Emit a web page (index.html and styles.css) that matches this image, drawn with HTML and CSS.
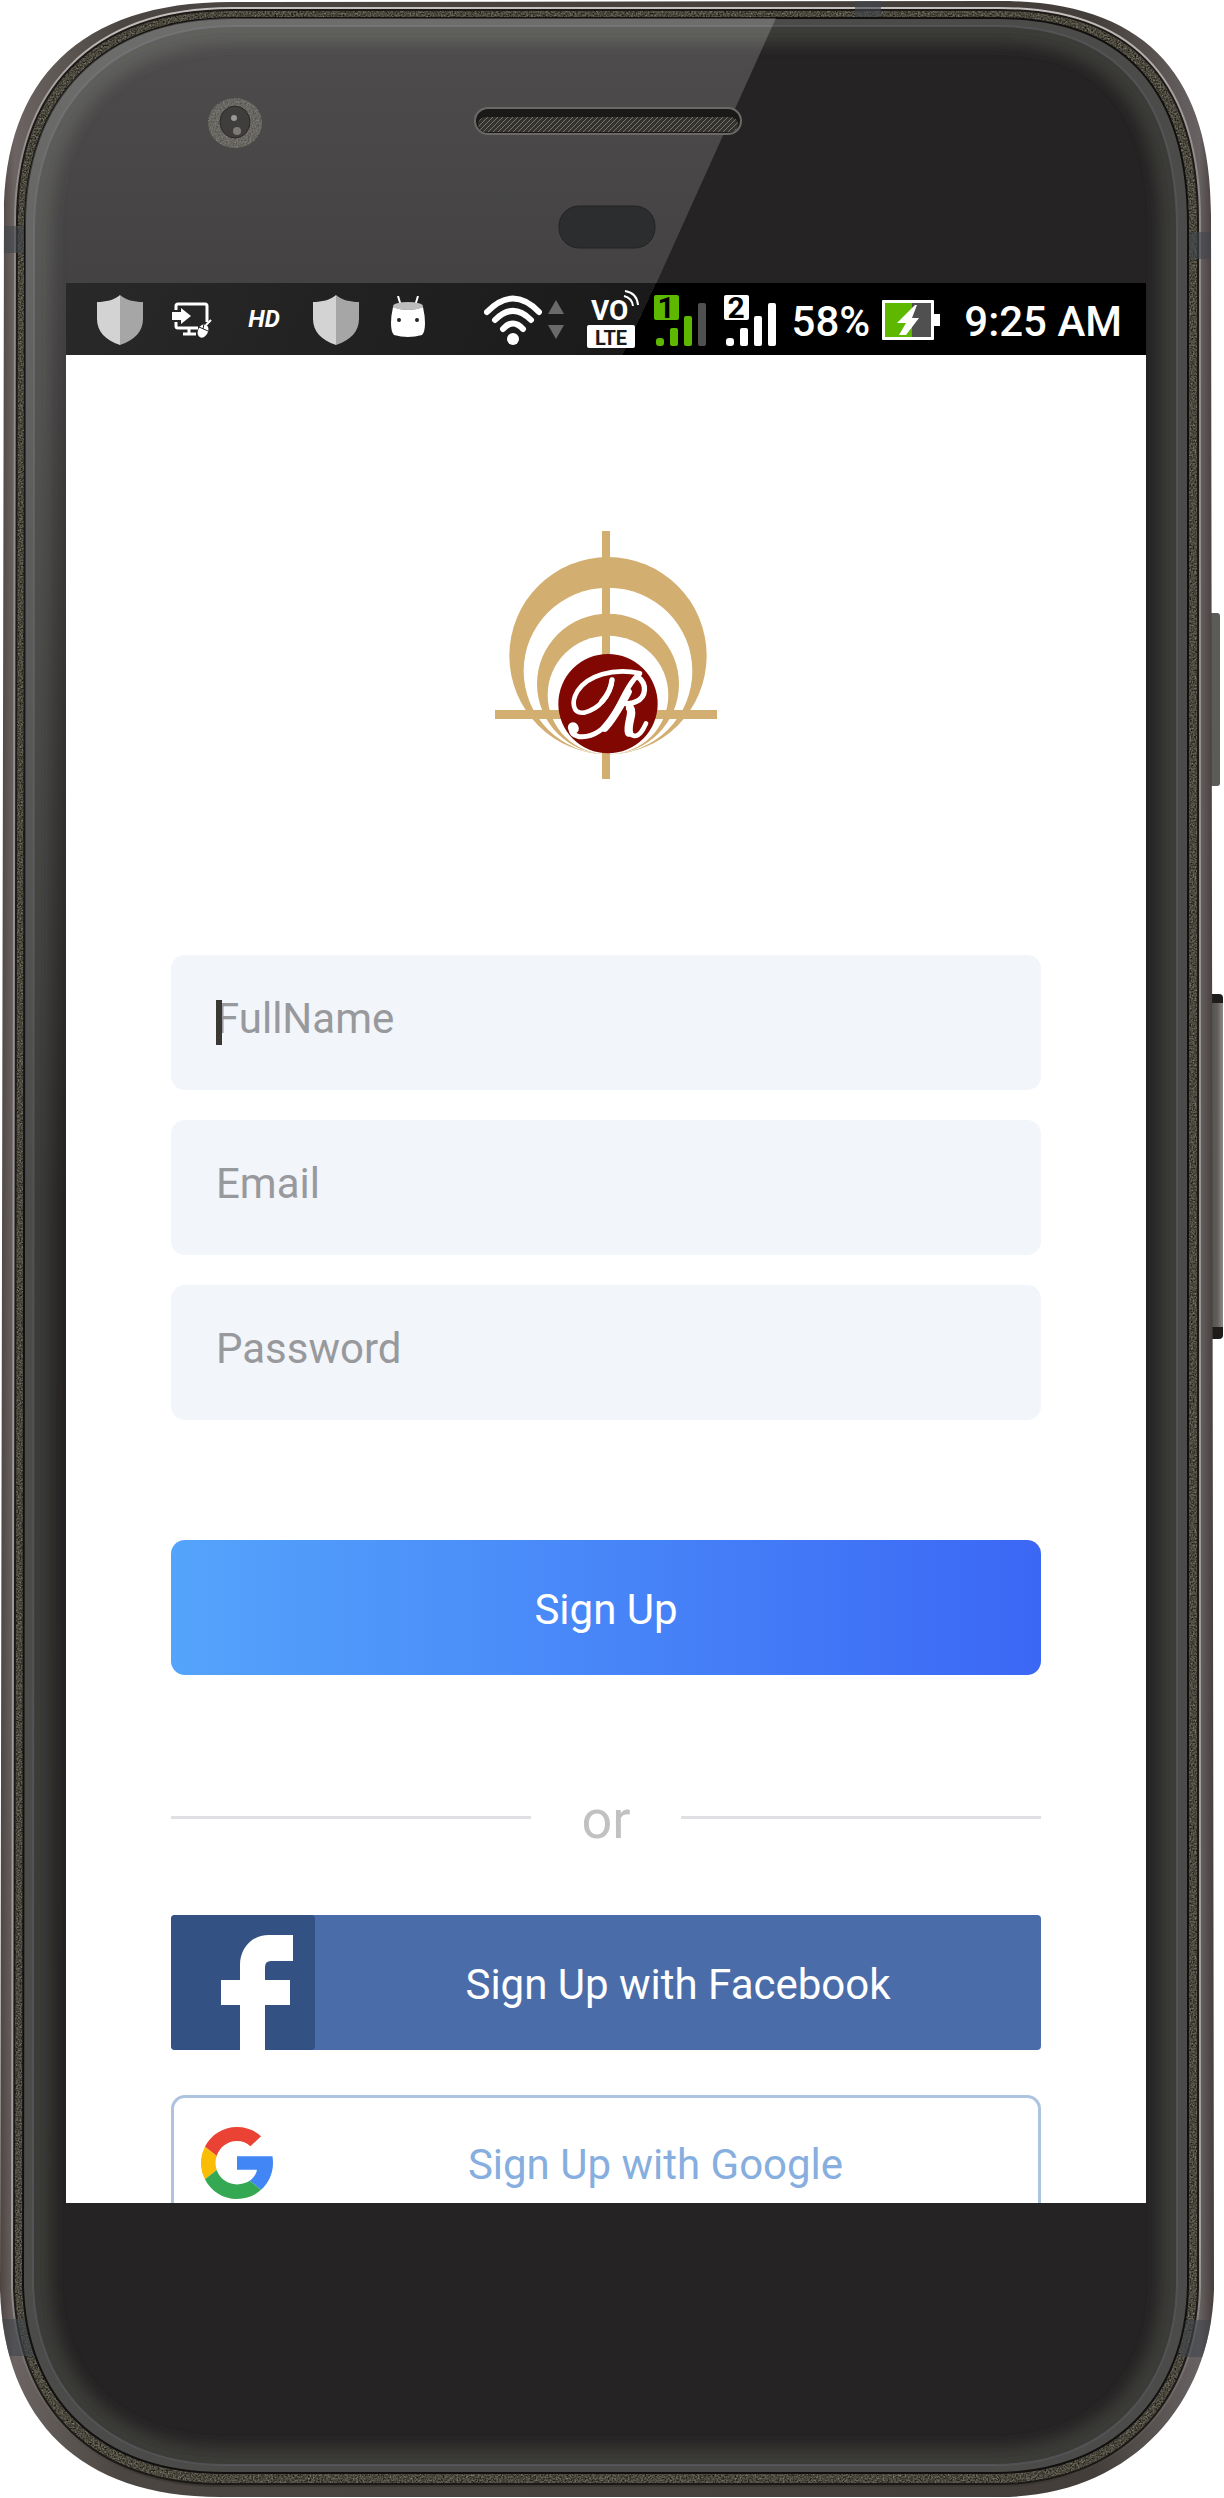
FILE: index.html
```html
<!DOCTYPE html>
<html lang="en">
<head>
<meta charset="utf-8">
<meta name="viewport" content="width=device-width, initial-scale=1">
<title>Sign Up</title>
<link rel="stylesheet" href="styles.css">
</head>
<body>
<main class="phone">
  <svg class="phone-body" viewBox="0 0 1224 2498" preserveAspectRatio="none" aria-hidden="true">
    <defs>
      <linearGradient id="metal" x1="0" x2="1" y1="0" y2="0">
        <stop offset="0" stop-color="#4c4542"/><stop offset=".012" stop-color="#6b6462"/>
        <stop offset=".1" stop-color="#4b4642"/><stop offset=".9" stop-color="#433e3a"/>
        <stop offset=".988" stop-color="#686162"/><stop offset="1" stop-color="#443d3b"/>
      </linearGradient>
      <linearGradient id="edge" x1="0" x2="0" y1="0" y2="1">
        <stop offset="0" stop-color="#c4c0be"/><stop offset=".06" stop-color="#8f8a88"/>
        <stop offset=".9" stop-color="#a5a0a2"/><stop offset=".97" stop-color="#67625e"/><stop offset="1" stop-color="#3b3833"/>
      </linearGradient>
      <linearGradient id="shine" gradientUnits="userSpaceOnUse" x1="0" x2="0" y1="18" y2="1200">
        <stop offset="0" stop-color="#fff" stop-opacity=".19"/>
        <stop offset=".28" stop-color="#fff" stop-opacity=".13"/>
        <stop offset="1" stop-color="#fff" stop-opacity="0"/>
      </linearGradient>
      <linearGradient id="key" x1="0" x2="1" y1="0" y2="0">
        <stop offset="0" stop-color="#4c4b47"/><stop offset=".65" stop-color="#5e5d59"/><stop offset="1" stop-color="#8d8987"/>
      </linearGradient>
      <pattern id="mesh" width="5" height="5" patternUnits="userSpaceOnUse">
        <rect width="5" height="5" fill="#34332f"/>
        <path d="M-1 6L6 -1M-1 1L1 -1M4 6L6 4" stroke="#77746f" stroke-width="1"/>
      </pattern>
      <filter id="grain" x="0" y="0" width="1" height="1" color-interpolation-filters="sRGB">
        <feTurbulence type="fractalNoise" baseFrequency=".6" numOctaves="2" result="n"/>
        <feColorMatrix in="n" type="matrix" values=".5 .3 0 0 -.11  .5 .3 0 0 -.12  .5 .3 0 0 -.16  0 0 0 0 1"/>
        <feComposite in2="SourceGraphic" operator="in"/>
      </filter>
      <filter id="soft" x="-5%" y="-5%" width="110%" height="110%"><feGaussianBlur stdDeviation="7"/></filter>
      <clipPath id="shell"><path d="M4 215C4 80 80 2 230 2L1000 1C1145 1 1211 75 1211 215L1214 2290C1210 2410 1125 2497 1000 2497H220C80 2497 4 2420 0 2290Z"/></clipPath>
      <clipPath id="glass"><path d="M25 225C25 100 100 18 234 18H998C1130 18 1188 96 1188 225V2286C1186 2398 1112 2473 996 2473H224C100 2473 26 2400 23 2286Z"/></clipPath>
      <clipPath id="face"><path d="M34 230C34 110 108 26 236 26H996C1122 26 1177 104 1177 230V2284C1176 2390 1106 2465 994 2465H226C110 2465 35 2392 33 2284Z"/></clipPath>
    </defs>
    <!-- power and volume keys -->
    <rect x="1206" y="613" width="14" height="173" rx="3" fill="#5b5c58"/>
    <rect x="1206" y="994" width="17" height="345" rx="4" fill="#1e1c1b"/>
    <rect x="1206" y="1003" width="17" height="324" fill="url(#key)"/>
    <!-- metal frame -->
    <path d="M4 215C4 80 80 2 230 2L1000 1C1145 1 1211 75 1211 215L1214 2290C1210 2410 1125 2497 1000 2497H220C80 2497 4 2420 0 2290Z" fill="url(#metal)"/>
    <path d="M17 222C17 92 90 10 232 10H1000C1138 10 1198 88 1198 222V2288C1195 2404 1118 2484 998 2484H222C92 2484 18 2408 14 2288Z" fill="#1c1a18" stroke="url(#edge)" stroke-width="6"/>
    <path d="M17 222C17 92 90 10 232 10H1000C1138 10 1198 88 1198 222V2288C1195 2404 1118 2484 998 2484H222C92 2484 18 2408 14 2288Z" filter="url(#grain)"/>
    <path d="M17 222C17 92 90 10 232 10H1000C1138 10 1198 88 1198 222V2288C1195 2404 1118 2484 998 2484H222C92 2484 18 2408 14 2288Z" fill="none" stroke="#1c1917" stroke-width="2"/>
    <!-- antenna bands -->
    <g clip-path="url(#shell)" fill="#41464c" fill-opacity=".6">
      <path d="M0 226H25V253H0ZM1186 232H1214V259H1186ZM855 0H881V18H855ZM0 2319H40V2356H0ZM1180 2320H1220V2357H1180Z"/>
    </g>
    <!-- glass -->
    <path d="M25 225C25 100 100 18 234 18H998C1130 18 1188 96 1188 225V2286C1186 2398 1112 2473 996 2473H224C100 2473 26 2400 23 2286Z" fill="#4b4b49" stroke="#12100f" stroke-width="2"/>
    <g clip-path="url(#face)">
      <rect width="1224" height="2498" fill="#252323"/>
      <path d="M34 230C34 110 108 26 236 26H996C1122 26 1177 104 1177 230V2284C1176 2390 1106 2465 994 2465H226C110 2465 35 2392 33 2284Z" fill="none" stroke="#3b3a37" stroke-width="36" filter="url(#soft)"/>
    </g>
    <path d="M34 230C34 110 108 26 236 26H996C1122 26 1177 104 1177 230V2284C1176 2390 1106 2465 994 2465H226C110 2465 35 2392 33 2284Z" fill="none" stroke="#59585c" stroke-opacity=".8" stroke-width="2"/>
    <path clip-path="url(#glass)" d="M0 18H776L624 355L0 1738Z" fill="url(#shine)"/>
    <!-- camera, speaker, proximity sensor -->
    <ellipse cx="235" cy="123" rx="27" ry="25" filter="url(#grain)"/>
    <ellipse cx="235" cy="123" rx="27" ry="25" fill="#8a8888" fill-opacity=".5"/>
    <ellipse cx="235" cy="122" rx="15" ry="16" fill="#403e3d" stroke="#2a2827"/>
    <circle cx="234" cy="118" r="3" fill="#999"/><circle cx="237" cy="131" r="4" fill="#7d7a76"/>
    <rect x="475" y="108" width="266" height="26" rx="13" fill="#1a1917" stroke="#6b6867" stroke-width="2"/>
    <rect x="478" y="117" width="260" height="15" rx="8" fill="url(#mesh)"/>
    <rect x="559" y="206" width="96" height="42" rx="20" fill="#2c2d2f" stroke="#242324"/>
  </svg>

  <div class="screen">
    <header class="status">
      <div class="notices">
        <svg width="46" height="50" viewBox="0 0 46 50" aria-hidden="true"><path d="M23 0C17 5 9 7 0 7V24C0 36 8 45 23 50Z" fill="#d3d3d3"/><path d="M23 0C29 5 37 7 46 7V24C46 36 38 45 23 50Z" fill="#a6a6a6"/></svg>
        <svg width="40" height="36" viewBox="0 0 40 36" aria-hidden="true"><path d="M4 8V4Q4 2 6 2H33Q35 2 35 4V20M4 20V24Q4 26 6 26H26M17 26V31M11 32H24" fill="none" stroke="#fff" stroke-width="3"/><path d="M0 10H9V6L19 14L9 22V18H0Z" fill="#fff"/><ellipse cx="31" cy="29" rx="5" ry="7" transform="rotate(25 31 29)" fill="#fff"/><path d="M34 23L39 18" stroke="#fff" stroke-width="2"/><path d="M27 25L36 29M32 22L31 27" stroke="#222"/></svg>
        <span class="hd">HD</span>
        <svg width="46" height="50" viewBox="0 0 46 50" aria-hidden="true"><path d="M23 0C17 5 9 7 0 7V24C0 36 8 45 23 50Z" fill="#d3d3d3"/><path d="M23 0C29 5 37 7 46 7V24C46 36 38 45 23 50Z" fill="#a6a6a6"/></svg>
        <svg class="droid" width="34" height="42" viewBox="0 0 34 42" aria-hidden="true"><path d="M7 0L10 10M27 0L24 10" stroke="#fff" stroke-width="2"/><path d="M2 11Q17 17 32 11Q34 20 34 27Q34 36 31 39Q17 43 3 39Q0 36 0 27Q0 20 2 11Z" fill="#fff"/><ellipse cx="17" cy="10" rx="15" ry="4" fill="#bdbdbd"/><circle cx="8" cy="24" r="2" fill="#222"/><circle cx="26" cy="24" r="2" fill="#222"/></svg>
      </div>
      <div class="signals">
        <svg width="91" height="58" viewBox="0 0 91 58" aria-hidden="true"><g fill="none" stroke="#fff" stroke-width="6" stroke-linecap="round"><path d="M3 22Q29 -5 55 22M11 30Q29 12 47 30M19 39Q29 28 39 39"/></g><circle cx="29" cy="49" r="6" fill="#fff"/><path d="M72 10L80 24H64ZM64 35H80L72 49Z" fill="#6a6a6a"/></svg>
        <svg width="55" height="58" viewBox="0 0 55 58" aria-hidden="true"><text x="4" y="30" class="vo">VO</text><path d="M38 1Q50 3 51 15M37 6Q45 8 46 16" fill="none" stroke="#fff" stroke-width="2"/><rect y="35" width="48" height="23" rx="2" fill="#fff"/><text x="24" y="55" text-anchor="middle" class="lte">LTE</text></svg>
        <svg width="58" height="58" viewBox="0 0 58 58" aria-hidden="true"><g fill="#5fb800"><rect y="5" width="25" height="25" rx="2"/><rect x="2" y="48" width="8" height="8" rx="3"/><rect x="16" y="38" width="8" height="18" rx="2"/><rect x="30" y="26" width="8" height="30" rx="2"/></g><rect x="44" y="13" width="8" height="43" rx="2" fill="#505050"/><text x="12" y="28" text-anchor="middle" class="sim">1</text></svg>
        <svg width="56" height="58" viewBox="0 0 56 58" aria-hidden="true"><g fill="#fff"><rect y="5" width="25" height="25" rx="2"/><rect x="2" y="48" width="8" height="8" rx="3"/><rect x="16" y="38" width="8" height="18" rx="2"/><rect x="30" y="26" width="8" height="30" rx="2"/><rect x="44" y="13" width="8" height="43" rx="2"/></g><text x="12" y="28" text-anchor="middle" class="sim">2</text></svg>
        <span class="reading">58%</span>
        <svg width="70" height="58" viewBox="0 0 70 58" aria-hidden="true"><rect x="0" y="10" width="52" height="40" rx="1" fill="#fff"/><path d="M51 24H58V36H51Z" fill="#fff"/><rect x="3" y="13" width="27" height="34" fill="#5fb800"/><rect x="30" y="13" width="19" height="34" fill="#505050"/><path d="M33 15L15 33H24L17 45H24L37 28H30L35 15Z" fill="#fff"/></svg>
        <time class="reading">9:25 AM</time>
      </div>
    </header>

    <form class="signup">
      <svg class="logo" width="222" height="248" viewBox="45 33 666 744" role="img" aria-label="Logo">
        <circle cx="384" cy="407" r="296" fill="#d2ae70"/>
        <ellipse cx="384" cy="453" rx="253" ry="250" fill="#fff"/>
        <ellipse cx="384" cy="492" rx="213" ry="211" fill="#d2ae70"/>
        <ellipse cx="384" cy="525" rx="181" ry="178" fill="#fff"/>
        <path d="M366 33H390V777H366ZM45 570H711V597H45Z" fill="#d2ae70"/>
        <circle cx="384" cy="551" r="149" fill="#800702"/>
        <g fill="none" stroke="#fff" stroke-linecap="round" stroke-linejoin="round">
          <path d="M396 480C391 526 358 568 312 578C278 582 273 546 292 514C322 467 398 443 480 460" stroke-width="14"/>
          <path d="M396 480C394 500 384 524 366 544" stroke-width="16"/>
          <path d="M473 470C502 492 500 530 468 545C454 552 440 552 428 549" stroke-width="16"/>
          <path d="M478 462C448 486 428 536 404 580C378 626 340 654 298 650C276 646 270 634 276 620" stroke-width="15"/>
          <path d="M444 516C420 560 400 598 374 624" stroke-width="23"/>
          <path d="M428 549C460 556 462 572 454 594C444 622 440 642 464 648C480 648 490 628 498 610" stroke-width="14"/>
          <path d="M450 564C462 580 440 612 447 638" stroke-width="25"/>
          <path d="M279 622L281 626" stroke-width="31"/>
        </g>
      </svg>

      <div class="fields">
        <div class="field"><input type="text" placeholder="FullName" aria-label="FullName"><span class="caret"></span></div>
        <div class="field"><input type="email" placeholder="Email" aria-label="Email"></div>
        <div class="field"><input type="password" placeholder="Password" aria-label="Password"></div>
      </div>

      <button type="submit" class="button primary"><span>Sign Up</span></button>

      <div class="divider"><span>or</span></div>

      <button type="button" class="button facebook">
        <svg width="144" height="135" viewBox="0 0 144 135" aria-hidden="true"><rect width="144" height="135" rx="4" fill="#335182"/><path d="M122 20H98C80 20 69 34 69 50V65H50V90H69V135H94V90H119V65H94V52Q94 46 100 46H122Z" fill="#fff"/></svg>
        <span>Sign Up with Facebook</span>
      </button>
      <button type="button" class="button google">
        <svg width="72" height="72" viewBox="2 2 44 44" aria-hidden="true"><path fill="#ea4335" d="M24 10.600c3.200 0 6 1.100 8.200 3.200l6.500-6.200C34.900 4.100 29.900 2 24 2 15.400 2 8 6.900 4.400 14.100l7.200 5.600C13.300 14.400 18.200 10.600 24 10.600z"/><path fill="#4285f4" d="M45.700 19.800H24v8.300h12.200c-.5 2.800-2.100 5.200-4.500 6.800l7 5.500C42.800 36.600 46 30.900 46 24.100c0-1.500-.1-2.900-.3-4.300z"/><path fill="#fbbc05" d="M11.600 28.300a13.400 13.400 0 0 1 0-8.600l-7.200-5.600a22 22 0 0 0 0 19.800z"/><path fill="#34a853" d="M24 46c5.900 0 10.900-1.900 14.700-5.600l-7-5.500c-2 1.300-4.500 2.200-7.700 2.200-5.800 0-10.700-3.800-12.400-8.800l-7.200 5.600C8 41.100 15.400 46 24 46z"/></svg>
        <span>Sign Up with Google</span>
      </button>
    </form>
  </div>
</main>
</body>
</html>
```
FILE: styles.css
```css
* {
  box-sizing: border-box;
}

body {
  margin: 0;
  background: #fff;
  font-family: Roboto, "Liberation Sans", sans-serif;
  font-size: 42px;
  line-height: 50px;
}

.phone {
  display: grid;
}

.phone-body,
.screen {
  grid-area: 1 / 1;
}

.phone-body {
  width: 100%;
  height: 100%;
}

.screen {
  z-index: 1;
  margin: 283px 78px 295px 66px;
  overflow: hidden;
  background: #fff;
}

.status {
  display: flex;
  justify-content: space-between;
  align-items: center;
  height: 72px;
  padding: 0 24px 0 18px;
  background: linear-gradient(115deg, #292929 0, #1a1a1a 53%, #000 53%);
  color: #fff;
}

.notices {
  display: grid;
  grid-template-columns: repeat(5, 72px);
  align-items: center;
  justify-items: center;
}

.notices svg {
  margin-top: 2px;
}

.notices .droid {
  margin: 0 0 4px;
}

.hd {
  font-size: 24px;
  font-weight: 700;
  font-style: italic;
}

.signals {
  display: flex;
  align-items: center;
  gap: 12px;
  font-weight: 500;
  white-space: nowrap;
}

.reading {
  padding-top: 6px;
}

.vo {
  fill: #fff;
  font-size: 28px;
  font-weight: 700;
}

.lte {
  fill: #1a1a1a;
  font-size: 20px;
  font-weight: 700;
}

.sim {
  font-size: 30px;
  font-weight: 700;
}

.signup {
  display: flex;
  flex-direction: column;
  padding: 176px 105px 0;
}

.logo {
  align-self: center;
}

.fields {
  display: grid;
  gap: 30px;
  margin: 176px 0 120px;
}

.field {
  position: relative;
}

.field input {
  display: block;
  width: 100%;
  height: 135px;
  padding: 0 45px 8px;
  border: 0;
  border-radius: 14px;
  background: #f2f5fa;
  color: #333;
  font: inherit;
}

.field input::placeholder {
  color: #98999c;
  opacity: 1;
}

.caret {
  position: absolute;
  top: 45px;
  left: 45px;
  width: 6px;
  height: 45px;
  background: #3b3833;
}

.button {
  display: flex;
  align-items: center;
  height: 135px;
  padding: 0;
  border: 0;
  border-radius: 14px;
  color: #fff;
  font: inherit;
}

.button span {
  flex: 1;
  padding-top: 4px;
  text-align: center;
}

.primary {
  background: linear-gradient(90deg, #54a4fb, #3b67f5);
}

.divider {
  display: flex;
  align-items: center;
  margin: 107px 0 63px;
  color: #c1c1c1;
  font-size: 54px;
  line-height: 64px;
}

.divider::before,
.divider::after {
  content: "";
  flex: 1;
  height: 3px;
  background: #e0e0e4;
}

.divider span {
  width: 150px;
  padding-top: 6px;
  text-align: center;
}

.facebook {
  margin-bottom: 45px;
  border-radius: 4px;
  background: #4a6daa;
}

/* The last button runs past the bottom of the screen. */
.google {
  margin-bottom: -27px;
  padding-left: 27px;
  border: 3px solid #adc3e0;
  background: #fff;
  color: #86aede;
}
```
